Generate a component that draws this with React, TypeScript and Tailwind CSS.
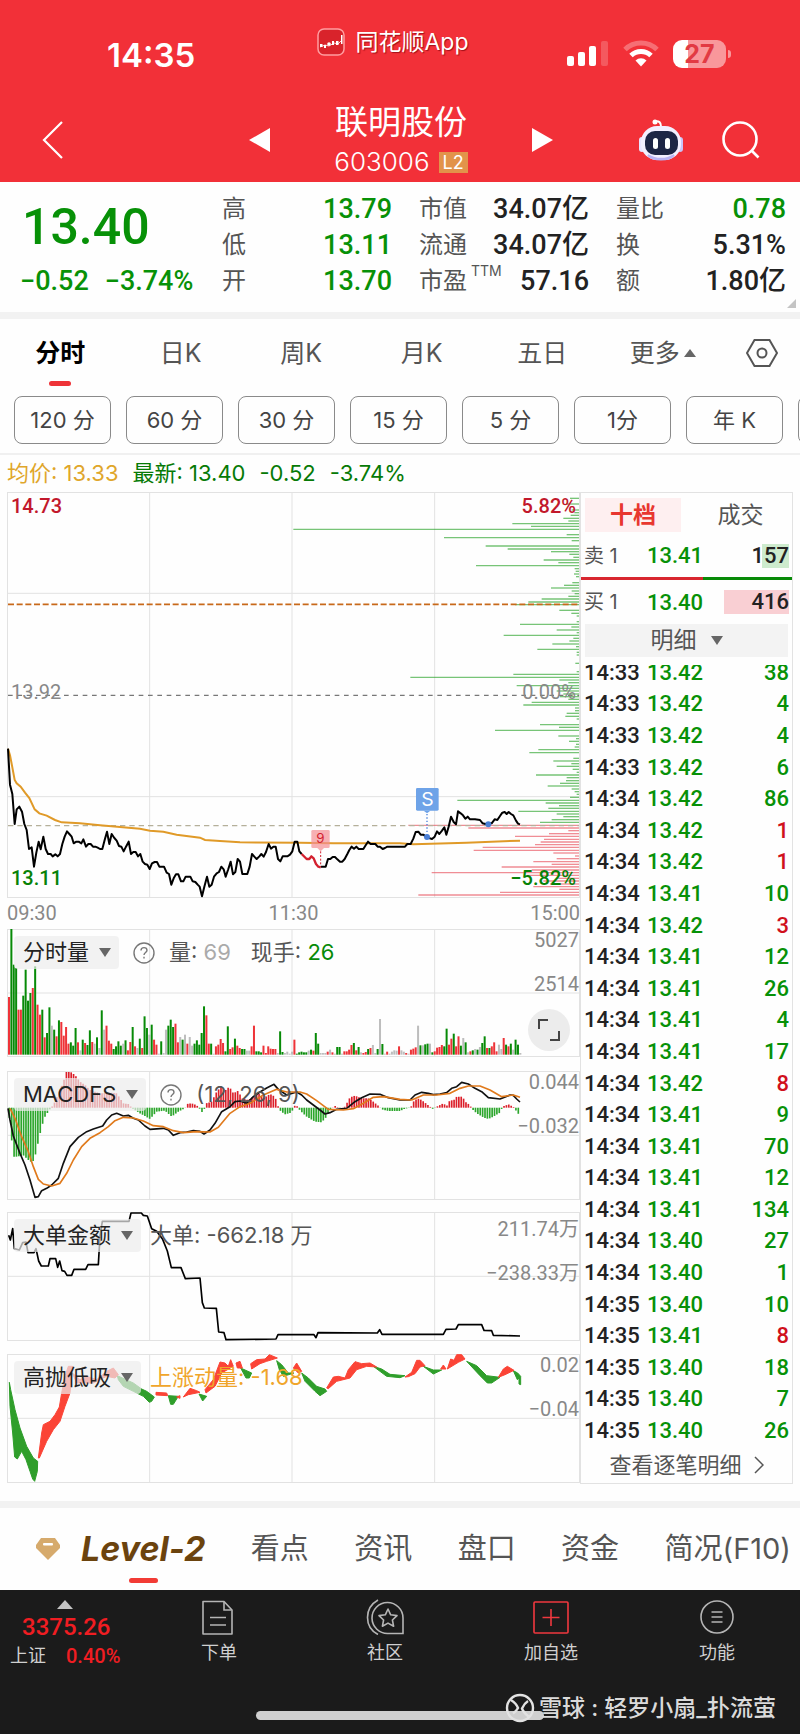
import React from 'react';

const NUM = "font-['Roboto','Noto_Sans_CJK_SC',sans-serif]";

// All charts share one coordinate system, three units per pixel.
const LEFT = 21;
const WIDTH = 1719;
const GRID_X = [449, 876, 1304];
const STEP = 7.135;

const PRICE_A =
  '24,776 30,884 37,912 44,1002 50,958 58,950 66,965 73,1002 80,1020 87,1077 95,1072 102,1130 109,1088 116,1055 122,1078 130,1040 137,1077 144,1092 152,1092 158,1099 166,1093 173,1099 180,1092 187,1062 194,1040 201,1024 208,1032 215,1040 221,1060 229,1055 236,1055 244,1060 250,1048 258,1070 265,1062 272,1062 279,1070 286,1070 293,1073 300,1077 307,1077 314,1050 321,1025 328,1062 335,1032 343,1044 350,1052 357,1068 364,1070 371,1084 378,1070 386,1055 393,1092 400,1086 407,1086 414,1099 421,1092 428,1115 435,1122 442,1124 449,1137 456,1120 464,1116 471,1116 478,1130 492,1130 500,1148 507,1152 514,1184 521,1165 528,1153 535,1153 543,1174 550,1174 557,1160 571,1160 578,1174 586,1176 593,1184 599,1190 606,1219 613,1190 621,1160 628,1190 635,1184 642,1160 650,1150 657,1146 664,1130 671,1138 677,1160 684,1140 692,1115 699,1153 706,1146 713,1107 720,1115 727,1152 742,1152 749,1130 756,1092 763,1100 770,1107 778,1099 784,1092 791,1100 798,1086 806,1062 813,1076 820,1070 827,1070 834,1107 841,1114 848,1099 862,1099 870,1094 877,1084 884,1055 892,1055 898,1084 905,1092';
const PRICE_DROP = '905,1092 920,1107 928,1107 934,1099 941,1105 948,1122 955,1130 962,1132';
const PRICE_B =
  '962,1130 977,1130 984,1107 991,1107 998,1101 1005,1101 1012,1108 1020,1115 1027,1115 1034,1107 1042,1092 1048,1080 1055,1070 1062,1076 1069,1070 1076,1077 1090,1077 1097,1066 1104,1055 1112,1062 1126,1062 1133,1070 1140,1070 1148,1077 1155,1074 1162,1070 1215,1070 1222,1062 1232,1062 1240,1046 1247,1026 1255,1025 1262,1034 1270,1034 1281,1042 1296,1047 1304,1040 1311,1024 1318,1032 1326,1022 1333,1012 1339,1034 1346,1010 1353,980 1361,996 1368,1003 1374,964 1382,970 1389,976 1396,986 1403,980 1410,988 1425,988 1440,990 1448,1000 1456,1002 1465,1000 1475,1000 1484,988 1492,990 1500,978 1507,968 1514,966 1520,972 1526,966 1533,972 1540,976 1548,992 1554,1001 1560,1003';
const AVERAGE =
  '24,776 30,796 37,832 44,870 50,880 62,890 75,908 88,924 104,958 118,970 140,977 165,990 185,997 240,1000 300,1006 360,1011 420,1016 450,1022 490,1025 530,1034 600,1043 615,1050 660,1053 720,1057 900,1058 1000,1060 1200,1060 1240,1063 1400,1058 1560,1052';

// y,start pairs of the price distribution; every bar ends at the right edge
const PROFILE =
  '25,1710 42,1700 60,1715 68,1723 76,1712 85,1690 93,1705 101,1537 109,1593 118,880 134,1700 143,1332 152,1715 168,1457 177,1523 185,1653 193,1708 202,1720 210,1631 218,1675 227,1428 236,1724 244,1727 252,1722 260,1728 278,1717 286,1692 294,1653 303,1715 311,1724 319,1705 327,1625 336,1585 344,1545 361,1678 370,1714 378,1730 395,1730 403,1560 411,1714 420,1670 428,1730 436,1511 445,1720 453,1708 462,1657 470,1728 478,1612 487,1730 495,1730 520,1726 545,1730 553,1540 562,1231 570,1678 578,1705 587,1550 595,1678 603,1670 612,1690 620,1680 628,1705 637,1595 645,1570 654,1725 662,1725 670,1700 679,1696 687,1730 704,1620 712,1677 721,1485 738,1675 746,1728 754,1707 763,1728 771,1724 779,1615 788,1588 805,1720 813,1660 821,1714 829,1670 838,1718 847,1730 855,1608 863,1700 872,1698 880,1680 888,1643 897,1715 905,1724 913,1730 922,1710 931,1372 939,1637 947,1677 955,1645 964,1555 972,1670 980,1690 989,1655 997,1620 1006,1225 1014,1405 1022,1705 1031,1647 1039,1545 1048,1632 1056,1622 1064,1605 1072,1448 1081,1421 1089,1660 1098,1725 1106,1670 1115,1600 1123,1655 1131,1505 1140,1595 1148,1295 1156,1580 1165,1675 1173,1630 1182,1650 1190,1600 1198,1678 1207,1500 1215,1255';

// r = up, g = down, x = flat; the number is the top of the bar
const VOLUME =
  'r232 g28 g135 g145 r270 r270 g228 g150 g243 g220 r205 g140 r255 r285 g270 r353 g340 g263 x318 g330 r350 g302 r307 r348 r322 r372 g368 g378 g325 r368 x392 g360 r370 g376 g332 r367 x372 g353 x385 g272 x330 r318 r363 r372 g388 g380 g365 g378 x372 g362 r392 r367 g322 r380 x385 g357 r385 g290 g325 x345 g315 r360 r375 x402 g365 x400 x330 g318 g300 g322 r312 r368 x352 g360 x345 r372 x352 x378 g372 g362 g375 g340 g260 r287 r372 g372 x402 r380 r375 r358 r370 g395 g320 r388 r383 g357 r378 r385 g388 g388 x393 x393 r380 r318 g395 g395 g398 r378 r400 r380 r387 r388 r388 x400 g335 g397 x400 x396 x402 x396 r360 g402 g398 g396 g398 g398 x393 g390 r393 g340 g372 x400 x400 x400 r396 x390 r398 x402 g382 g382 x402 r395 r395 r390 r376 g370 r392 g382 x398 r400 r397 g388 r385 x376 x400 g388 x298 g373 x402 r396 x402 x396 x392 x393 r380 x392 x396 r400 x402 r390 r387 r383 x318 g377 x377 g374 g372 x372 g398 r395 r384 r382 r376 g380 g327 r375 r357 g342 r380 r350 g378 x355 g368 x398 r395 g392 x388 g390 x382 g370 g350 r385 g385 r380 r368 r395 x375 x388 r355 g375 r380 g372 x390 g360 g375 x400';

const HISTOGRAM =
  '26,575 33,640 40,710 50,710 70,706 85,720 97,728 105,710 115,665 125,620 135,590 150,567 158,558 165,545 180,510 192,480 198,456 212,456 225,465 240,485 255,495 270,510 300,520 330,518 350,520 370,550 385,552 395,563 400,567 420,580 450,597 470,575 495,572 515,590 535,575 555,565 560,552 575,550 590,556 597,563 605,577 613,567 618,550 635,545 650,515 663,500 675,512 688,500 700,520 715,512 725,535 745,540 760,530 775,520 790,535 810,522 825,530 832,552 838,570 855,583 875,578 880,563 886,555 893,560 900,572 920,590 945,605 965,607 980,590 990,568 1005,558 1020,565 1035,560 1050,532 1065,527 1085,535 1105,535 1120,545 1138,560 1145,568 1165,573 1200,573 1215,566 1232,563 1240,545 1252,535 1265,540 1280,552 1290,560 1300,568 1310,560 1330,550 1340,558 1350,540 1360,542 1370,530 1388,530 1395,545 1410,555 1415,566 1430,580 1450,592 1465,597 1480,590 1500,578 1508,560 1525,553 1540,560 1550,575 1560,588';
const DIF =
  '24,565 30,600 40,648 60,700 75,735 90,780 105,832 115,830 125,812 140,805 155,795 175,775 190,730 210,680 235,652 260,635 280,627 308,618 320,600 335,585 350,580 370,588 385,586 400,595 415,600 435,618 450,628 490,625 505,630 520,646 540,638 560,636 580,632 600,634 612,642 630,630 645,610 665,575 690,560 705,545 720,543 740,550 760,530 780,516 800,504 822,493 835,508 860,525 890,516 905,525 920,540 940,555 960,570 975,582 990,578 1010,568 1040,565 1065,545 1085,533 1110,522 1140,523 1165,533 1200,540 1230,540 1245,525 1265,517 1285,520 1300,524 1320,522 1340,518 1355,505 1370,500 1385,487 1405,492 1425,505 1445,515 1465,533 1500,537 1530,525 1540,526 1550,537 1560,546';
const DEA =
  '30,565 45,595 65,650 85,695 100,740 115,778 130,792 155,798 180,790 200,760 220,720 245,680 270,655 300,638 325,620 345,602 370,592 400,594 430,603 460,617 490,620 520,632 550,638 590,635 630,636 655,622 690,580 720,560 750,550 790,525 830,508 860,516 900,516 920,522 950,542 985,568 1030,570 1060,566 1090,550 1120,532 1150,530 1200,538 1235,540 1270,525 1310,525 1350,520 1380,505 1405,498 1440,498 1470,510 1505,530 1540,525 1560,532';

const BIG_ORDERS =
  '26,108 31,122 38,88 43,148 58,152 68,130 78,128 84,160 102,160 108,148 116,185 124,200 145,200 150,178 167,178 173,204 179,185 186,214 194,216 201,228 215,228 222,210 257,210 264,196 295,196 300,110 307,66 387,66 393,41 424,41 430,48 442,50 455,88 470,96 488,120 502,155 514,205 543,205 556,238 600,236 607,310 613,326 649,327 656,398 672,400 678,421 828,419 834,406 942,406 948,415 954,400 1132,401 1139,391 1146,405 1330,405 1338,390 1368,389 1375,376 1445,376 1452,393 1475,394 1480,408 1560,410';

const SWING_DOWN = [
  '28,548 32,570 45,630 60,685 80,740 100,775 113,785 112,815 104,845 98,838 90,815 78,780 65,755 52,778 44,772 38,700 30,620',
  '352,528 400,550 425,568 440,575 463,592 455,605 448,608 430,590 400,575 370,560 355,540',
  '505,588 535,590 520,614 512,614',
  '597,583 620,590 608,604',
  '722,505 755,520 748,535 738,535',
  '830,483 845,495 865,520 882,520 850,530 838,510',
  '905,520 925,535 950,560 975,568 980,575 960,588 945,575 915,545',
  '1120,500 1145,508 1170,524 1215,528 1200,534 1160,530',
  '1270,500 1300,511 1325,511 1300,523',
  '1400,485 1430,498 1460,528 1500,533 1475,550 1462,550 1440,528',
  '1540,513 1553,520 1562,530 1562,555 1557,553 1557,535 1552,540',
];
const SWING_UP = [
  '115,775 125,700 130,675 150,665 165,645 178,622 185,580 195,530 205,500 217,500 215,530 210,580 195,620 180,665 160,690 140,725 118,775',
  '217,520 240,540 260,530 290,540 320,515 340,505 355,525 345,535 320,530 280,550 230,550',
  '468,578 500,580 503,588 468,586',
  '530,592 540,588 540,596',
  '550,592 570,566 590,573 600,578 565,585',
  '615,570 640,540 660,487 675,490 685,500 692,480 700,500 665,520 645,560 618,580',
  '708,490 720,485 727,505 712,505',
  '752,492 770,480 795,478 808,465 832,475 800,485 780,492 755,508',
  '880,505 890,490 905,515 895,520',
  '980,565 1000,532 1015,530 1035,535 1045,510 1065,486 1085,492 1110,490 1130,502 1100,500 1070,510 1050,535 1010,545 985,567',
  '1215,532 1235,518 1250,482 1260,482 1275,498 1260,502 1245,522 1225,531',
  '1322,508 1330,496 1338,508',
  '1342,508 1352,478 1362,482 1370,465 1385,465 1395,478 1375,488',
  '1495,533 1510,508 1522,500 1542,512 1515,525',
];

const TRADES: [string, string, number, boolean?][] = [
  ['14:33', '13.42', 38],
  ['14:33', '13.42', 4],
  ['14:33', '13.42', 4],
  ['14:33', '13.42', 6],
  ['14:34', '13.42', 86],
  ['14:34', '13.42', 1, true],
  ['14:34', '13.42', 1, true],
  ['14:34', '13.41', 10],
  ['14:34', '13.42', 3, true],
  ['14:34', '13.41', 12],
  ['14:34', '13.41', 26],
  ['14:34', '13.41', 4],
  ['14:34', '13.41', 17],
  ['14:34', '13.42', 8, true],
  ['14:34', '13.41', 9],
  ['14:34', '13.41', 70],
  ['14:34', '13.41', 12],
  ['14:34', '13.41', 134],
  ['14:34', '13.40', 27],
  ['14:34', '13.40', 1],
  ['14:35', '13.40', 10],
  ['14:35', '13.41', 8, true],
  ['14:35', '13.40', 18],
  ['14:35', '13.40', 7],
  ['14:35', '13.40', 26],
];

const toPoints = (text: string) => text.split(' ').map((pair) => pair.split(',').map(Number));

// Resamples a polyline at one value per minute
const resample = (text: string) => {
  const points = toPoints(text);
  const bars: [number, number][] = [];
  for (let x = 28; x <= 1560; x += STEP) {
    const next = Math.max(1, points.findIndex((point) => point[0] >= x));
    const [x0, y0] = points[next - 1];
    const [x1, y1] = points[next];
    bars.push([x, y0 + ((y1 - y0) * (x - x0)) / (x1 - x0)]);
  }
  return bars;
};

const volumeColor: Record<string, string> = { r: '#ee3338', g: '#078a07', x: '#bdbdbd' };

interface ChartProps {
  top: number;
  height: number;
  rows: number[];
  label: string;
  children: React.ReactNode;
}

const Chart: React.FC<ChartProps> = ({ top, height, rows, label, children }) => (
  <svg viewBox={`${LEFT} ${top} ${WIDTH} ${height}`} className="block w-full h-auto" role="img" aria-label={label}>
    <g stroke="#e2e2e2" strokeWidth="3" fill="none">
      <rect x={LEFT + 1.5} y={top + 1.5} width={WIDTH - 3} height={height - 3} />
      {GRID_X.map((x) => (
        <line key={x} x1={x} x2={x} y1={top} y2={top + height} />
      ))}
      {rows.map((y) => (
        <line key={y} x1={LEFT} x2={LEFT + WIDTH} y1={y} y2={y} />
      ))}
    </g>
    {children}
  </svg>
);

const Caret = () => (
  <svg viewBox="0 0 12 9" className="w-3 h-[9px] shrink-0" fill="#666" aria-hidden="true">
    <path d="M0 0h12L6 9z" />
  </svg>
);

const HelpButton = () => (
  <button type="button" aria-label="说明" className="shrink-0">
    <svg viewBox="0 0 22 22" className="w-[22px] h-[22px] block" fill="none" stroke="#777" strokeWidth="1.4">
      <circle cx="11" cy="11" r="10" />
      <path d="M8 8.6c0-1.8 1.3-3 3-3s3 1.100 3 2.700c0 2.200-3 2.300-3 4.700" />
      <path d="M11 14.800v1.700" />
    </svg>
  </button>
);

interface PanelProps {
  name: string;
  help?: boolean;
  info: React.ReactNode;
  scale: [string, string];
  scaleClass: string;
  children: React.ReactNode;
}

const Panel: React.FC<PanelProps> = ({ name, help, info, scale, scaleClass, children }) => (
  <div className="relative">
    {children}
    <div className="absolute left-[7px] top-[7px] flex items-center text-[22px] leading-[33px] text-[#555]">
      <button type="button" className="flex items-center gap-[10px] h-[33px] pl-[9px] pr-2 bg-[#ededed]/70 text-[#222] rounded-sm">
        {name}
        <Caret />
      </button>
      {help && (
        <span className="ml-[14px] flex">
          <HelpButton />
        </span>
      )}
      <span className={help ? 'ml-[14px]' : 'ml-[9px]'}>{info}</span>
    </div>
    <div className={`absolute right-px flex flex-col gap-6 text-right text-xl leading-5 text-[#888] ${NUM} ${scaleClass}`}>
      <span>{scale[0]}</span>
      <span>{scale[1]}</span>
    </div>
  </div>
);

const StatusBar = () => (
  <div className="grid grid-cols-3 h-[84px] text-white">
    <div className="pl-[107px] pt-[35px] text-[33px] leading-10 font-semibold">14:35</div>
    <div className="flex justify-center gap-[10px] pt-7 pr-[14px]">
      <svg viewBox="0 0 28 28" className="w-7 h-7" fill="none" aria-hidden="true">
        <rect x="1" y="1" width="26" height="26" rx="6" fill="#d9232b" stroke="#ff9da0" strokeWidth="1.500" />
        <path d="M3 19l5-2 4 1 5-3 4 1 4-4" stroke="#fff" strokeWidth=".8" />
        <g fill="#fff">
          <rect x="3" y="16" width="2.500" height="3" />
          <rect x="7" y="17" width="2" height="3" />
          <circle cx="12" cy="16" r="1.800" />
          <rect x="15" y="13" width="2" height="4" />
          <rect x="19" y="13" width="2.500" height="4" />
          <rect x="24" y="7" width="1.500" height="9" />
        </g>
      </svg>
      <span className="text-[23px] leading-7 whitespace-nowrap [text-shadow:1px_1px_1px_#a01018]">同花顺App</span>
    </div>
    <div className="flex justify-end items-start gap-[14px] pt-10 pr-[74px]">
      <svg viewBox="0 0 42 28" className="w-[42px] h-7" fill="#fff" aria-label="信号">
        <rect x="0" y="16" width="7" height="10" rx="2" />
        <rect x="11" y="12" width="7" height="14" rx="2" />
        <rect x="22" y="6" width="7" height="20" rx="2" />
        <rect x="34" y="1" width="7" height="25" rx="2" opacity=".2" />
      </svg>
      <svg viewBox="0 0 36 28" className="w-9 h-7" fill="none" stroke="#fff" strokeWidth="5" aria-label="无线网络">
        <path d="M2 9.500a23 23 0 0 1 32 0" opacity=".3" />
        <path d="M8 15.500a14.500 14.500 0 0 1 20 0" />
        <path d="M18 26.500l-5.500-6a8 8 0 0 1 11 0z" fill="#fff" stroke="none" />
      </svg>
      <div className="flex items-center">
        <div className="w-[53px] h-7 rounded-[9px] bg-[linear-gradient(90deg,#fff_28%,#f9979b_28%)] text-center text-[25px] leading-7 font-bold text-[#e23a43]">
          27
        </div>
        <div className="w-[3px] h-2 ml-[2px] -mr-[5px] rounded-r-full bg-[#f9979b]" />
      </div>
    </div>
  </div>
);

const TitleBar = () => (
  <div className="grid grid-cols-[1fr_auto_1fr] items-center h-[98px] pl-[42px] pr-10 pt-[14px] text-white">
    <button type="button" aria-label="返回" className="justify-self-start">
      <svg viewBox="0 0 22 38" className="w-[22px] h-[38px] block" fill="none" stroke="#fff" strokeWidth="2.200">
        <path d="M20 1L2 19l18 18" />
      </svg>
    </button>
    <div className="flex items-center gap-16">
      <button type="button" aria-label="上一只">
        <svg viewBox="0 0 21 24" className="w-[21px] h-6 block" fill="#fff">
          <path d="M21 0v24L0 12z" />
        </svg>
      </button>
      <div className="flex flex-col items-center">
        <h1 className="text-[33px] leading-[44px]">联明股份</h1>
        <div className="flex items-center gap-[9px]">
          <span className="text-[26px] leading-9 font-light">603006</span>
          <span className="px-1 text-lg leading-[21px] bg-[#e2934a]">L2</span>
        </div>
      </div>
      <button type="button" aria-label="下一只">
        <svg viewBox="0 0 21 24" className="w-[21px] h-6 block" fill="#fff">
          <path d="M0 0v24l21-12z" />
        </svg>
      </button>
    </div>
    <div className="justify-self-end flex items-center gap-[38px]">
      <button type="button" aria-label="智能助手">
        <svg viewBox="0 0 46 42" className="w-[46px] h-[42px] block">
          <path d="M17 2.500c4-1 6 1 6 5" fill="none" stroke="#fff" strokeWidth="2" />
          <circle cx="17" cy="3" r="2.500" fill="#fff" />
          <rect x="1" y="18" width="6" height="15" rx="3" fill="#e8e4ff" />
          <rect x="39" y="18" width="6" height="15" rx="3" fill="#c9c4f8" />
          <rect x="3" y="7" width="40" height="34" rx="16" fill="#f2efff" />
          <path d="M10 36c8 5 18 5 26 0-5 6-21 6-26 0z" fill="#b9b3f5" stroke="#b9b3f5" strokeWidth="2" />
          <rect x="7" y="12" width="33" height="24" rx="10" fill="#1d2545" />
          <rect x="15" y="19" width="5" height="11" rx="2.500" fill="#fff" />
          <rect x="27" y="19" width="5" height="11" rx="2.500" fill="#fff" />
        </svg>
      </button>
      <button type="button" aria-label="搜索">
        <svg viewBox="0 0 38 38" className="w-[38px] h-[38px] block" fill="none" stroke="#fff" strokeWidth="2.600">
          <circle cx="18" cy="18" r="16.500" />
          <path d="M29.500 29.500l7 7" />
        </svg>
      </button>
    </div>
  </div>
);

interface StatProps {
  label: React.ReactNode;
  value: string;
  down?: boolean;
}

const Stat: React.FC<StatProps> = ({ label, value, down }) => (
  <div className="flex items-center justify-between whitespace-nowrap">
    <dt className="text-2xl leading-9 text-[#555] flex">{label}</dt>
    <dd className={`text-[27px] leading-9 font-medium ${NUM} ${down ? 'text-[#079107]' : 'text-[#222]'}`}>{value}</dd>
  </div>
);

const Quote = () => (
  <section className="relative flex pt-[9px] pb-[13px] pr-[14px] border-b-[7px] border-[#f2f2f2]">
    <div className={`w-[222px] shrink-0 pl-5 text-[#079107] font-medium ${NUM}`}>
      <div className="pl-[2px] pt-2 text-[50px] leading-[56px]">13.40</div>
      <div className="flex gap-4 pt-2 text-[27px] leading-9 whitespace-nowrap">
        <span>−0.52</span>
        <span>−3.74%</span>
      </div>
    </div>
    <dl className="flex-1 grid grid-cols-3 gap-x-[27px]">
      <Stat label="高" value="13.79" down />
      <Stat label="市值" value="34.07亿" />
      <Stat label="量比" value="0.78" down />
      <Stat label="低" value="13.11" down />
      <Stat label="流通" value="34.07亿" />
      <Stat label="换" value="5.31%" />
      <Stat label="开" value="13.70" down />
      <Stat
        label={
          <>
            市盈<sup className="top-0 text-sm leading-4 pl-1">TTM</sup>
          </>
        }
        value="57.16"
      />
      <Stat label="额" value="1.80亿" />
    </dl>
    <svg viewBox="0 0 9 9" className="absolute right-1 bottom-1 w-[9px] h-[9px]" fill="#c4c4c4" aria-hidden="true">
      <path d="M9 0v9H0z" />
    </svg>
  </section>
);

const PeriodTabs = () => (
  <nav className="flex items-start h-[77px] pt-4 text-[25px] leading-9 text-[#555]">
    <button type="button" className="flex-1 flex flex-col items-center text-black font-bold">
      分时
      <span className="mt-[10px] w-[22px] h-[5px] rounded-full bg-[#ee3338]" />
    </button>
    <button type="button" className="flex-1">日K</button>
    <button type="button" className="flex-1">周K</button>
    <button type="button" className="flex-1">月K</button>
    <button type="button" className="flex-1">五日</button>
    <button type="button" className="flex-1 flex items-center justify-center gap-1">
      更多
      <svg viewBox="0 0 12 8" className="w-3 h-2" fill="#666" aria-hidden="true">
        <path d="M0 8h12L6 0z" />
      </svg>
    </button>
    <button type="button" aria-label="设置" className="w-[77px] mt-1 flex justify-center">
      <svg viewBox="0 0 32 28" className="w-8 h-7 block" fill="none" stroke="#555" strokeWidth="2">
        <path d="M8.500 1h15l7.500 13-7.500 13h-15L1 14z" />
        <circle cx="16" cy="14" r="4.500" />
      </svg>
    </button>
  </nav>
);

const PERIODS = ['120 分', '60 分', '30 分', '15 分', '5 分', '1分', '年 K'];

const PeriodButtons = () => (
  <div className="flex gap-[15px] pl-[14px] pb-[9px] overflow-hidden border-b-2 border-[#f0f0f0]">
    {PERIODS.map((period) => (
      <button
        key={period}
        type="button"
        className="w-[97px] h-12 shrink-0 border border-[#8a8a8a] rounded-lg text-[22px] text-[#444]"
      >
        {period}
      </button>
    ))}
    <button type="button" aria-label="更多周期" className="w-[97px] h-12 shrink-0 border border-[#8a8a8a] rounded-lg" />
  </div>
);

const PriceChart = () => (
  <div className="relative">
    <Chart top={6} height={1218} rows={[310, 920]} label="分时走势">
      <g strokeWidth="4" strokeOpacity=".65">
        {toPoints(PROFILE).map(([y, x]) => (
          <line key={y} x1={x} x2="1737" y1={y} y2={y} stroke={y > 1000 ? '#e8505c' : '#2ea52e'} />
        ))}
      </g>
      <g fill="none" strokeWidth="4">
        <line x1="24" x2="1737" y1="343" y2="343" stroke="#c8691a" strokeWidth="5" strokeDasharray="18 8" />
        <line x1="24" x2="1737" y1="616" y2="616" stroke="#777" strokeDasharray="14 14" />
        <line x1="24" x2="1737" y1="1007" y2="1007" stroke="#b5b09a" strokeDasharray="16 12" />
        <polyline points={AVERAGE} stroke="#e09a28" strokeWidth="6" />
      </g>
      <g fill="none" stroke="#000" strokeWidth="6" strokeLinejoin="round">
        <polyline points={PRICE_A} />
        <polyline points={PRICE_B} />
        <polyline points={PRICE_DROP} stroke="#d3202f" strokeWidth="7" />
      </g>
      <rect x="934" y="1020" width="55" height="54" rx="4" fill="#f48f93" fillOpacity=".7" />
      <path d="M952 1074h20l-10 10z" fill="#f48f93" fillOpacity=".7" />
      <line x1="962" x2="962" y1="1084" y2="1130" stroke="#d3202f" strokeWidth="3" strokeDasharray="6 5" />
      <text x="961" y="1060" textAnchor="middle" fontSize="40" fill="#d3202f">9</text>
      <rect x="1248" y="894" width="68" height="68" rx="4" fill="#6ea3e8" />
      <path d="M1271 962h20l-10 8z" fill="#6ea3e8" />
      <line x1="1281" x2="1281" y1="972" y2="1034" stroke="#4a80d8" strokeWidth="4" strokeDasharray="4 6" />
      <text x="1282" y="948" textAnchor="middle" fontSize="58" fill="#fff">S</text>
      <circle cx="1281" cy="1041" r="9" fill="#4a7fd6" />
      <circle cx="1465" cy="1003" r="9" fill="#4a7fd6" />
    </Chart>
    <div className={`absolute inset-0 flex flex-col justify-between px-1 pt-1 pb-[10px] text-xl leading-5 ${NUM}`}>
      <div className="flex justify-between font-medium text-[#c2182b]">
        <span>14.73</span>
        <span>5.82%</span>
      </div>
      <div className="flex justify-between text-[#888]">
        <span>13.92</span>
        <span>0.00%</span>
      </div>
      <div className="flex justify-between font-medium text-[#078207]">
        <span>13.11</span>
        <span>−5.82%</span>
      </div>
    </div>
  </div>
);

const Charts = () => (
  <div className="flex-1 min-w-0">
    <PriceChart />
    <div className={`flex justify-between h-[31px] text-xl leading-[31px] text-[#888] ${NUM}`}>
      <span>09:30</span>
      <span>11:30</span>
      <span>15:00</span>
    </div>

    <div className="relative mb-[14px]">
      <Panel
        name="分时量"
        help
        info={
          <>
            量: <span className="text-[#aaa]">69</span>
            <span className="pl-5">现手: </span>
            <span className="text-[#078a07]">26</span>
          </>
        }
        scale={['5027', '2514']}
        scaleClass="top-[1px]"
      >
        <Chart top={28} height={384} rows={[220]} label="成交量">
          {VOLUME.split(' ').map((bar, index) => {
            const y = Number(bar.slice(1));
            return <rect key={index} x={24 + index * STEP} y={y} width="6" height={405 - y} fill={volumeColor[bar[0]]} />;
          })}
        </Chart>
      </Panel>
      <button
        type="button"
        aria-label="全屏"
        className="absolute right-[10px] bottom-[6px] w-[42px] h-[42px] rounded-full bg-[#ececec] flex items-center justify-center"
      >
        <svg viewBox="0 0 22 22" className="w-[22px] h-[22px]" fill="none" stroke="#444" strokeWidth="2">
          <path d="M1 10V1h9M21 12v9h-9" />
        </svg>
      </button>
    </div>

    <div className="mb-3">
      <Panel name="MACDFS" help info="(12, 26, 9)" scale={['0.044', '−0.032']} scaleClass="top-[1px]">
        <Chart top={453} height={387} rows={[646]} label="MACD">
          {resample(HISTOGRAM).map(([x, y]) => (
            <line key={x} x1={x} x2={x} y1="563" y2={y} strokeWidth="5" stroke={y < 563 ? '#dc1f2a' : '#2ca62c'} />
          ))}
          <g fill="none" strokeWidth="5" strokeLinejoin="round">
            <polyline points={DIF} stroke="#111" />
            <polyline points={DEA} stroke="#e07a1c" />
          </g>
        </Chart>
      </Panel>
    </div>

    <div className="mb-[13px]">
      <Panel name="大单金额" info="大单: -662.18 万" scale={['211.74万', '−238.33万']} scaleClass="top-[7px]">
        <Chart top={38} height={387} rows={[231]} label="大单金额">
          <polyline points={BIG_ORDERS} fill="none" stroke="#000" strokeWidth="5" strokeLinejoin="round" />
        </Chart>
      </Panel>
    </div>

    <Panel
      name="高抛低吸"
      info={<span className="text-[#f0a52a]">上涨动量: -1.68</span>}
      scale={['0.02', '−0.04']}
      scaleClass="top-[1px]"
    >
      <Chart top={463} height={387} rows={[656]} label="高抛低吸">
        <g strokeWidth="3" strokeLinejoin="round">
          {SWING_DOWN.map((points) => (
            <polygon key={points} points={points} fill="#2f9e2b" stroke="#2f9e2b" />
          ))}
          {SWING_UP.map((points) => (
            <polygon key={points} points={points} fill="#fb4436" stroke="#fb4436" />
          ))}
        </g>
      </Chart>
    </Panel>
  </div>
);

const OrderBook = () => (
  <aside className="w-[213px] shrink-0 flex flex-col border border-[#e2e2e2]">
    <div className="flex pl-1 pt-[5px] pr-1 text-[23px] leading-[34px]">
      <button type="button" className="w-24 bg-[#feeff0] text-[#e8372f] font-bold">十档</button>
      <button type="button" className="flex-1 pl-3 text-[#555]">成交</button>
    </div>
    <div className="flex items-center h-[45px] pt-[2px] pl-[3px] pr-[3px] text-[22px] text-[#555]">
      <span className="w-[63px] text-xl">卖 1</span>
      <span className={`text-[#079107] font-medium ${NUM}`}>13.41</span>
      <span
        className={`ml-auto leading-6 text-[#222] font-medium bg-[linear-gradient(90deg,transparent_28%,#cdebcd_28%)] ${NUM}`}
      >
        157
      </span>
    </div>
    <div className="flex h-[3px]">
      <div className="w-[58%] bg-[#d8262f]" />
      <div className="flex-1 bg-[#078a07]" />
    </div>
    <div className="flex items-center h-11 pl-[3px] pr-[3px] text-[22px] text-[#555]">
      <span className="w-[63px] text-xl">买 1</span>
      <span className={`text-[#079107] font-medium ${NUM}`}>13.40</span>
      <span className={`ml-auto w-[65px] h-6 leading-6 text-right text-[#222] font-medium bg-[#f9cfd3] ${NUM}`}>416</span>
    </div>
    <button
      type="button"
      className="flex items-center justify-center gap-[14px] mx-1 h-[33px] bg-[#f3f3f3] text-[23px] text-[#555]"
    >
      明细
      <Caret />
    </button>
    <div className="flex flex-col justify-end mt-[8px] h-[782px] overflow-hidden">
      <table className={`w-full h-[790px] shrink-0 text-[22px] leading-6 font-medium ${NUM}`}>
        <tbody>
          {TRADES.map(([time, price, lots, up], index) => (
            <tr key={index}>
              <td className="p-0 pl-[3px] w-[66px] text-[#222]">{time}</td>
              <td className="p-0 text-[#079107]">{price}</td>
              <td className={`p-0 pr-[3px] text-right ${up ? 'text-[#d0101c]' : 'text-[#079107]'}`}>{lots}</td>
            </tr>
          ))}
        </tbody>
      </table>
    </div>
    <a href="#trades" className="flex items-center justify-center gap-3 h-9 text-[22px] text-[#555]">
      查看逐笔明细
      <svg viewBox="0 0 10 18" className="w-[10px] h-[18px]" fill="none" stroke="#555" strokeWidth="1.500" aria-hidden="true">
        <path d="M1 1l8 8-8 8" />
      </svg>
    </a>
  </aside>
);

const SectionTabs = () => (
  <nav className="flex items-start justify-between h-[89px] border-t-[7px] border-[#f2f2f2] pl-9 pr-[9px] pt-[21px] text-[29px] leading-10 text-[#555] whitespace-nowrap">
    <button type="button" className="flex gap-[21px]">
      <svg viewBox="0 0 24 22" className="w-6 h-[22px] mt-[9px]" aria-hidden="true">
        <path d="M5 0h14l5 7v3L12 22 0 10V7z" fill="#d6aa6c" />
        <rect x="7" y="5" width="10" height="2.500" rx="1" fill="#fff" />
      </svg>
      <span className="flex flex-col items-center text-[34px] font-bold italic text-[#6b430e]">
        Level-2
        <span className="mt-[9px] w-[29px] h-[5px] rounded-full bg-[#f23b35]" />
      </span>
    </button>
    <button type="button">看点</button>
    <button type="button">资讯</button>
    <button type="button">盘口</button>
    <button type="button">资金</button>
    <button type="button">简况(F10)</button>
  </nav>
);

interface ActionProps {
  label: string;
  color?: string;
  children: React.ReactNode;
}

const Action: React.FC<ActionProps> = ({ label, color = '#b5b5b5', children }) => (
  <button type="button" className="flex-1 flex flex-col items-center gap-1 pt-[9px] text-lg leading-7 text-[#d0d0d0]">
    <svg viewBox="0 0 38 36" className="w-[38px] h-9" fill="none" stroke={color} strokeWidth="1.600" aria-hidden="true">
      {children}
    </svg>
    {label}
  </button>
);

const BottomBar = () => (
  <footer className="relative h-[145px] bg-[#1b1b1b]">
    <div className="flex items-start">
      <div className="w-[136px] shrink-0 pt-[10px] text-[#f01d22]">
        <svg viewBox="0 0 16 9" className="block w-4 h-[9px] ml-[57px]" fill="#c4c4c4" aria-hidden="true">
          <path d="M0 9h16L8 0z" />
        </svg>
        <div className={`pl-[22px] pt-[3px] text-2xl leading-[30px] font-medium ${NUM}`}>3375.26</div>
        <div className="flex items-center pl-[10px] gap-5">
          <span className="text-lg leading-7 text-[#d0d0d0]">上证</span>
          <span className={`text-xl leading-7 font-medium ${NUM}`}>0.40%</span>
        </div>
      </div>
      <Action label="下单">
        <path d="M3 2.500h21l8 8.500v24H3z" strokeLinejoin="round" />
        <path d="M24 3v8h7.500M10 18.500h16M10 26h16" />
      </Action>
      <Action label="社区">
        <path d="M37 34.500H22a15.500 15.500 0 1 1 15-15.500z" />
        <path d="M12 1C-2 9-2 28 12 35.500" />
        <path d="M22 10l2.700 5.800 6.300.8-4.600 4.400 1.200 6.200-5.600-3.100-5.600 3.100 1.200-6.200L13 16.600l6.300-.8z" strokeLinejoin="round" />
      </Action>
      <Action label="加自选" color="#f0383f">
        <rect x="2" y="3" width="34" height="31" rx="1" />
        <path d="M19 10v17M10.500 18.500h17" />
      </Action>
      <Action label="功能">
        <circle cx="19" cy="18" r="16" />
        <path d="M13.500 13h11M13.500 18h11M13.500 23h11" />
      </Action>
    </div>
    <div className="absolute left-1/2 bottom-[15px] w-72 h-[9px] -translate-x-1/2 rounded-full bg-[#cfcfcf]" />
    <div className="absolute right-6 bottom-3 flex items-center gap-1 text-[23px] leading-7 font-medium text-[#dadada] whitespace-nowrap">
      <svg viewBox="0 0 30 30" className="w-[30px] h-[30px]" fill="none" stroke="#e2e2e2" strokeWidth="2.400" aria-hidden="true">
        <circle cx="15" cy="15" r="13" />
        <path d="M6 7c3 2 6 5 7 8-1 2-3 4-5 5.500M23 8c-3 2-5 5-6 7.500 1 3 4 6 6.500 8" />
      </svg>
      雪球 : 轻罗小扇_扑流萤
    </div>
  </footer>
);

export default function App() {
  return (
    <div className="bg-[#fefefe] font-['Inter','Noto_Sans_CJK_SC',sans-serif]" lang="zh-CN">
      <header className="bg-[#f23038]">
        <StatusBar />
        <TitleBar />
      </header>
      <Quote />
      <PeriodTabs />
      <PeriodButtons />
      <div className="flex gap-[14px] pl-[7px] h-[37px] text-[22px] leading-[37px] text-[#067a06]">
        <span className="text-[#e0a62b]">均价: 13.33</span>
        <span>最新: 13.40</span>
        <span>-0.52</span>
        <span>-3.74%</span>
      </div>
      <main className="flex px-[7px] pb-[17px]">
        <Charts />
        <OrderBook />
      </main>
      <SectionTabs />
      <BottomBar />
    </div>
  );
}
